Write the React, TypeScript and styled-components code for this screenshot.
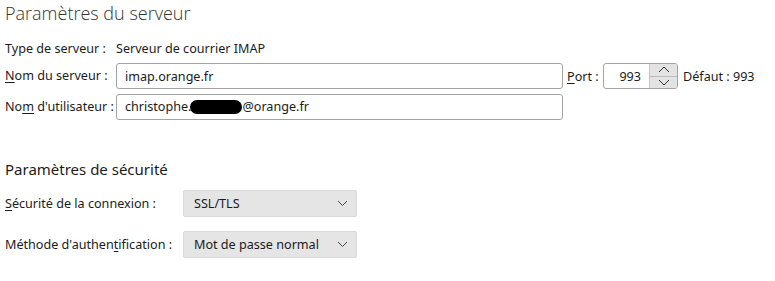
import React from 'react';
import styled, { createGlobalStyle } from 'styled-components';

const GlobalStyle = createGlobalStyle`
	html, body {
		margin: 0;
		padding: 0;
		background: #ffffff;
	}

	body {
		font-family: 'Noto Sans', 'Open Sans', sans-serif;
		font-size: 12.6px;
		color: #1b1b1b;
	}
`;

function ChevronDown() {
	return (
		<svg width="11" height="7" viewBox="0 0 11 7" fill="none">
			<path d="M1 1l4.5 4.5L10 1" stroke="#444" strokeWidth="1" />
		</svg>
	);
}

function Caret({ up }: { up?: boolean }) {
	return (
		<svg width="12" height="7" viewBox="0 0 12 7" fill="none">
			<path d={up ? 'M1 6l5-5 5 5' : 'M1 1l5 5 5-5'} stroke="#333" strokeWidth="1" />
		</svg>
	);
}

export default function App() {
	return (
		<>
			<GlobalStyle />
			<Page>
				<Title>Paramètres du serveur</Title>

				<ServerGrid>
					<Label>Type de serveur :</Label>
					<StaticValue>Serveur de courrier IMAP</StaticValue>

					<Label>
						<u>N</u>om du serveur :
					</Label>
					<InlineRow>
						<TextField $width={447}>imap.orange.fr</TextField>
						<PortLabel>
							<u>P</u>ort :
						</PortLabel>
						<NumberField>
							<NumberValue>993</NumberValue>
							<Spinner>
								<SpinButton>
									<Caret up />
								</SpinButton>
								<SpinButton $bottom>
									<Caret />
								</SpinButton>
							</Spinner>
						</NumberField>
						<DefaultText>Défaut : 993</DefaultText>
					</InlineRow>

					<Label>
						No<u>m</u> d'utilisateur :
					</Label>
					<InlineRow>
						<TextField $width={447}>
							christophe.<Redacted />@orange.fr
						</TextField>
					</InlineRow>
				</ServerGrid>

				<SectionTitle>Paramètres de sécurité</SectionTitle>

				<SecurityGrid>
					<Label>
						<u>S</u>écurité de la connexion :
					</Label>
					<Select>
						<span>SSL/TLS</span>
						<ChevronDown />
					</Select>

					<Label>
						Méthode d'authen<u>t</u>ification :
					</Label>
					<Select>
						<span>Mot de passe normal</span>
						<ChevronDown />
					</Select>
				</SecurityGrid>
			</Page>
		</>
	);
}

const Page = styled.div`
	padding: 0 0 0 5px;
	width: 770px;
`;

const Title = styled.h1`
	margin: 0;
	height: 39px;
	font-family: 'Open Sans', 'Noto Sans', sans-serif;
	font-weight: 300;
	font-size: 18px;
	line-height: 26px;
	color: #333;
`;

const ServerGrid = styled.div`
	display: grid;
	grid-template-columns: 111px auto;
	grid-template-rows: 20px 26px 26px;
	row-gap: 4px;
	align-items: center;

	& > :nth-child(n + 5) {
		margin-top: 1px;
	}
`;

const Label = styled.div`
	white-space: nowrap;
	line-height: 18px;

	u {
		text-decoration-thickness: 1px;
		text-underline-offset: 2px;
	}
`;

const StaticValue = styled.div`
	white-space: nowrap;
	line-height: 18px;
`;

const InlineRow = styled.div`
	display: flex;
	align-items: center;
	height: 26px;
`;

const TextField = styled.div<{ $width: number }>`
	box-sizing: border-box;
	width: ${p => p.$width}px;
	height: 26px;
	border: 1px solid #a3a3a3;
	border-radius: 3px;
	padding: 0 8px;
	display: flex;
	align-items: center;
	white-space: nowrap;
	background: #fff;
`;

const Redacted = styled.span`
	display: inline-block;
	width: 52px;
	height: 14px;
	background: #000;
	border-radius: 7px;
	margin: 0 0 0 -1px;
`;

const PortLabel = styled.div`
	margin-left: 4px;
	width: 36px;
	white-space: nowrap;

	u {
		text-underline-offset: 2px;
	}
`;

const NumberField = styled.div`
	box-sizing: border-box;
	width: 75px;
	height: 26px;
	border: 1px solid #a3a3a3;
	border-radius: 3px;
	display: flex;
	overflow: hidden;
`;

const NumberValue = styled.div`
	flex: 1;
	display: flex;
	align-items: center;
	justify-content: flex-end;
	padding-right: 8px;
`;

const Spinner = styled.div`
	width: 27px;
	display: flex;
	flex-direction: column;
	border-left: 1px solid #c4c4c4;
`;

const SpinButton = styled.div<{ $bottom?: boolean }>`
	flex: 1;
	background: #e3e3e3;
	display: flex;
	align-items: center;
	justify-content: center;
	border-top: ${p => (p.$bottom ? '1px solid #bcbcbc' : 'none')};
`;

const DefaultText = styled.div`
	margin-left: 5px;
	white-space: nowrap;
`;

const SectionTitle = styled.h2`
	margin: 0;
	padding-top: 39px;
	height: 22px;
	font-size: 15px;
	font-weight: 400;
	line-height: 22px;
	color: #1b1b1b;
`;

const SecurityGrid = styled.div`
	display: grid;
	grid-template-columns: 178px 174px;
	grid-auto-rows: 27px;
	row-gap: 14px;
	align-items: center;
	margin-top: 10px;
`;

const Select = styled.div`
	box-sizing: border-box;
	height: 27px;
	background: #e5e5e5;
	border: 1px solid #dadada;
	border-radius: 2px;
	display: flex;
	align-items: center;
	justify-content: space-between;
	padding: 0 8px 0 10px;
	white-space: nowrap;
`;
